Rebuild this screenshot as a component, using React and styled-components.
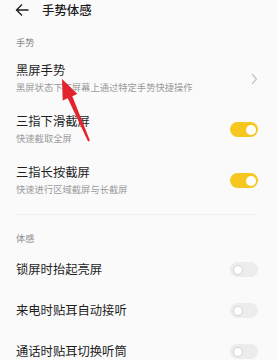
import React from "react";
import styled, { createGlobalStyle } from "styled-components";

const Global = createGlobalStyle`
  html, body { margin: 0; padding: 0; background: #fafafa; }
  body { font-family: "Noto Sans CJK SC", "Noto Sans", sans-serif; }
  * { box-sizing: border-box; }
`;

const Page = styled.div`
  position: relative;
  width: 277px;
  height: 360px;
  overflow: hidden;
  background: #fafafa;
`;

const Header = styled.div`
  height: 20px;
  display: flex;
  align-items: center;
  padding-left: 15px;
  gap: 13px;
`;

const Title = styled.div`
  font-size: 12.4px;
  font-weight: 500;
  color: #1c1c1c;
  line-height: 20px;
`;

const SectionLabel = styled.div`
  padding: 11px 16px 0;
  line-height: 22px;
  font-size: 9.2px;
  color: #8a8a8a;
`;

const Row = styled.div`
  display: flex;
  align-items: center;
  padding: 0 19px 0 16px;
  height: ${(p) => (p.$two ? 51 : 41)}px;
`;

const Texts = styled.div`
  flex: 1;
  display: flex;
  flex-direction: column;
`;

const RowTitle = styled.div`
  font-size: 12.3px;
  line-height: 17px;
  color: #1e1e1e;
`;

const RowSub = styled.div`
  font-size: 9.3px;
  line-height: 16px;
  color: #9b9b9b;
`;

const Track = styled.div`
  width: 28px;
  height: 15px;
  border-radius: 8px;
  background: ${(p) => (p.$on ? "#f6c81f" : "#ececec")};
  display: flex;
  align-items: center;
  justify-content: ${(p) => (p.$on ? "flex-end" : "flex-start")};
  padding: 0 2.5px;
`;

const Knob = styled.div`
  width: 10px;
  height: 10px;
  border-radius: 50%;
  background: #fff;
  border: ${(p) => (p.$on ? "none" : "1.5px solid #d4d4d4")};
`;

const Divider = styled.div`
  height: 1px;
  background: #efefef;
  margin: 8px 20px 1px 16px;
`;

const Overlay = styled.svg`
  position: absolute;
  left: 0;
  top: 0;
  pointer-events: none;
`;

const Toggle = ({ on }) => (
  <Track $on={on}>
    <Knob $on={on} />
  </Track>
);

const Item = ({ title, sub, right }) => (
  <Row $two={!!sub}>
    <Texts>
      <RowTitle>{title}</RowTitle>
      {sub && <RowSub>{sub}</RowSub>}
    </Texts>
    {right}
  </Row>
);

const Chevron = () => (
  <svg width="8" height="12" viewBox="0 0 8 12">
    <path d="M2 1 L6.5 6 L2 11" fill="none" stroke="#c4c4c4" strokeWidth="1.2" />
  </svg>
);

export default function App() {
  return (
    <Page>
      <Global />
      <Header>
        <svg width="14" height="14" viewBox="0 0 14 14">
          <path d="M1.5 7 H13.5 M7 1.5 L1.5 7 L7 12.5" fill="none" stroke="#1c1c1c" strokeWidth="1.3" />
        </svg>
        <Title>手势体感</Title>
      </Header>
      <SectionLabel>手势</SectionLabel>
      <Item title="黑屏手势" sub="黑屏状态下在屏幕上通过特定手势快捷操作" right={<Chevron />} />
      <Item title="三指下滑截屏" sub="快速截取全屏" right={<Toggle on />} />
      <Item title="三指长按截屏" sub="快速进行区域截屏与长截屏" right={<Toggle on />} />
      <Divider />
      <SectionLabel>体感</SectionLabel>
      <Item title="锁屏时抬起亮屏" right={<Toggle />} />
      <Item title="来电时贴耳自动接听" right={<Toggle />} />
      <Item title="通话时贴耳切换听筒" right={<Toggle />} />
      <Overlay width="277" height="360" viewBox="0 0 277 360">
        <polygon
          points="62,79 77.3,94.1 72.3,96.3 89.9,140.6 88.1,141.4 67.7,98.3 62.7,100.5"
          fill="#e3222b"
        />
      </Overlay>
    </Page>
  );
}
